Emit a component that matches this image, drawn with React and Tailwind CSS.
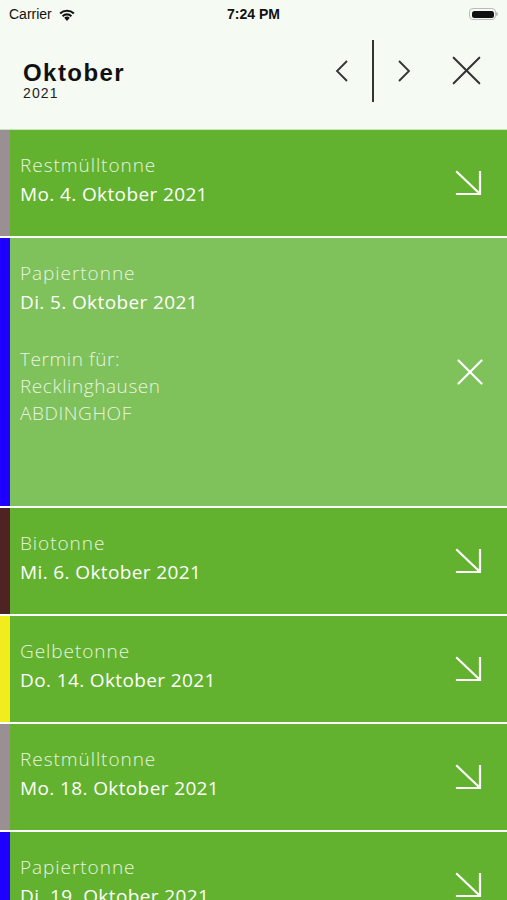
import React from 'react';

const rows = [
  { name: 'Restmülltonne', date: 'Mo. 4. Oktober 2021', strip: 'bg-[#9a8f93]' },
  { name: 'Papiertonne', date: 'Di. 5. Oktober 2021', strip: 'bg-[#1f00ff]', open: true },
  { name: 'Biotonne', date: 'Mi. 6. Oktober 2021', strip: 'bg-[#4e2323]' },
  { name: 'Gelbetonne', date: 'Do. 14. Oktober 2021', strip: 'bg-[#f2ec1e]' },
  { name: 'Restmülltonne', date: 'Mo. 18. Oktober 2021', strip: 'bg-[#9a8f93]' },
  { name: 'Papiertonne', date: 'Di. 19. Oktober 2021', strip: 'bg-[#1f00ff]' },
];

const ArrowIcon = () => (
  <svg width="28" height="26" viewBox="0 0 28 26" fill="none" stroke="white" strokeWidth="2.2" strokeLinecap="square">
    <path d="M2 2 L24 23" />
    <path d="M25 2 V24 H2" />
  </svg>
);

const CloseIcon = ({ color = 'white', size = 26, width = 2.2 }) => (
  <svg width={size} height={size} viewBox="0 0 26 26" fill="none" stroke={color} strokeWidth={width} strokeLinecap="round">
    <path d="M1.5 1.5 L24.5 24.5" />
    <path d="M24.5 1.5 L1.5 24.5" />
  </svg>
);

const StatusBar = () => (
  <div className="h-[28px] flex items-center justify-between px-[9px] text-[#111] font-['Liberation_Sans',sans-serif]">
    <div className="flex items-center gap-[6px] w-[100px]">
      <span className="text-[14px]">Carrier</span>
      <svg width="18" height="13" viewBox="0 0 18 13" fill="#111">
        <path d="M9 13 L6.2 9.8 A4 4 0 0 1 11.8 9.8 Z" />
        <path d="M3.9 7.4 A7.4 7.4 0 0 1 14.1 7.4 L12.7 8.9 A5.4 5.4 0 0 0 5.3 8.9 Z" />
        <path d="M1.4 4.8 A11 11 0 0 1 16.6 4.8 L15.2 6.3 A9 9 0 0 0 2.8 6.3 Z" />
      </svg>
    </div>
    <span className="text-[14px] font-bold">7:24 PM</span>
    <div className="w-[100px] flex justify-end">
      <div className="flex items-center">
        <div className="w-[27px] h-[12px] rounded-[4px] border border-[#bbb] p-[1.5px]">
          <div className="w-full h-full rounded-[2.5px] bg-[#111]" />
        </div>
        <div className="w-[1.5px] h-[4px] bg-[#bbb] rounded-r" />
      </div>
    </div>
  </div>
);

const Header = () => (
  <div className="h-[102px] flex items-center border-b border-[#c9e6b6] pl-[23px] pr-[26px] font-['Liberation_Sans',sans-serif]">
    <div className="flex-1 pt-[4px]">
      <div className="text-[24px] font-bold leading-[24px] tracking-[0.06em] text-[#111]">Oktober</div>
      <div className="text-[14px] leading-[16px] tracking-[0.08em] text-[#222]">2021</div>
    </div>
    <div className="flex items-center mb-[16px]">
      <svg width="14" height="22" viewBox="0 0 14 22" fill="none" stroke="#333" strokeWidth="1.8">
        <path d="M12 1 L2 11 L12 21" />
      </svg>
      <div className="w-[2px] h-[62px] bg-[#333] mx-[23px]" />
      <svg width="14" height="22" viewBox="0 0 14 22" fill="none" stroke="#333" strokeWidth="1.8">
        <path d="M2 1 L12 11 L2 21" />
      </svg>
      <div className="ml-[41px]">
        <CloseIcon color="#333" size={29} width={1.8} />
      </div>
    </div>
  </div>
);

const Row = ({ row }) => (
  <div className={`flex ${row.open ? 'h-[268px] bg-[#7fc15a]' : 'h-[106px] bg-[#62b22f]'}`}>
    <div className={`w-[10px] ${row.strip}`} />
    <div className="flex-1 flex items-center pl-[10px] pr-[24px]">
      <div className="flex-1 self-start pt-[21px] text-white font-['Open_Sans',sans-serif] text-[19px]">
        <div className="leading-[29px] font-light tracking-[0.05em] text-[#e8f4e0]">{row.name}</div>
        <div className="leading-[29px] font-medium tracking-[0.02em]">{row.date}</div>
        {row.open && (
          <div className="mt-[29px] leading-[27px] font-light tracking-[0.03em] text-[#e8f4e0]">
            <div>Termin für:</div>
            <div>Recklinghausen</div>
            <div>ABDINGHOF</div>
          </div>
        )}
      </div>
      {row.open ? <CloseIcon /> : <ArrowIcon />}
    </div>
  </div>
);

export default function App() {
  return (
    <div className="w-[507px] h-[900px] overflow-hidden bg-white">
      <div className="bg-[#f5faf2]">
        <StatusBar />
        <Header />
      </div>
      <div className="flex flex-col gap-[2px] bg-white">
        {rows.map((row, i) => (
          <Row key={i} row={row} />
        ))}
      </div>
    </div>
  );
}
